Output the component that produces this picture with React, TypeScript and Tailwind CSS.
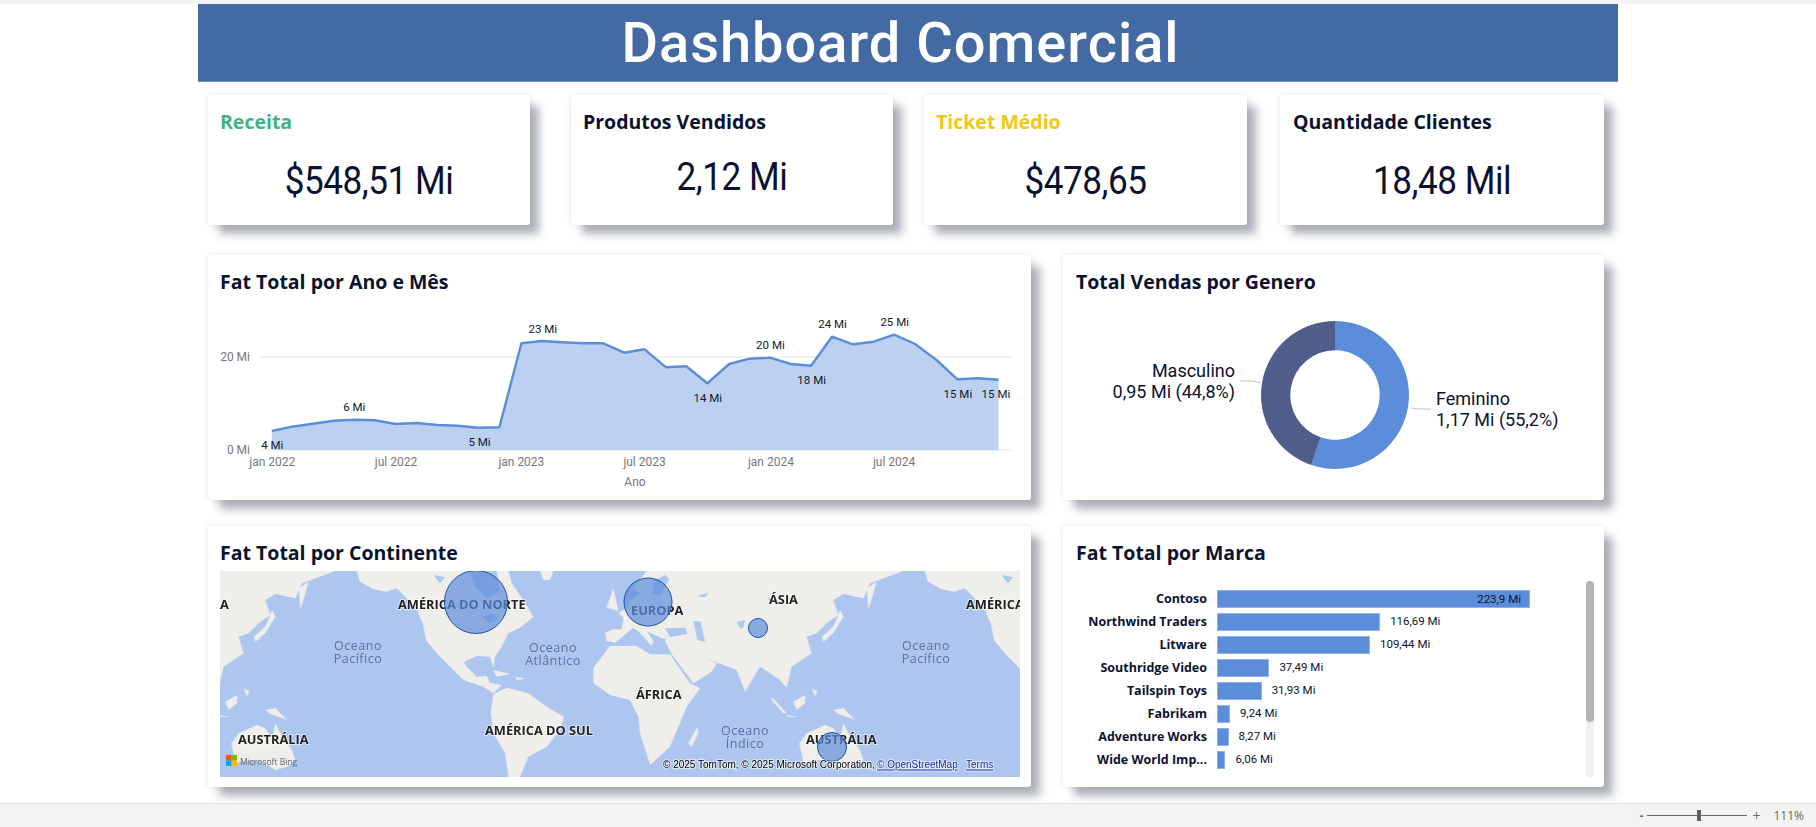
const titleFont = "font-['Open_Sans'] font-bold text-[#0b1230]";

function Card({ title, pad, className, children }: { title?: string; pad?: string; className?: string; children?: React.ReactNode }) {
  return (
    <div className={"relative bg-white rounded-[3px] shadow-[10px_10px_8px_-1px_rgba(110,114,130,0.55),0_0_6px_rgba(0,0,0,0.1)] " + (className ?? "")}>
      {title && (
        <div className={"pt-3 leading-[30px] text-[19.5px] " + (pad ?? "pl-3") + " " + titleFont}>{title}</div>
      )}
      {children}
    </div>
  );
}

function Kpi({ title, value, color, valueMt, className, pad }: { title: string; value: string; color: string; valueMt: string; className: string; pad: string }) {
  return (
    <Card className={"h-[130px] " + className}>
      <div className={"pt-3 leading-[30px] text-[19.5px] font-['Open_Sans'] font-bold " + pad + " " + color}>{title}</div>
      <div className={"text-center leading-[46px] text-[39px] scale-x-[0.9] font-[Roboto] tracking-[-0.5px] text-[#0b1230] " + valueMt}>{value}</div>
    </Card>
  );
}

const pts: [number, number][] = [[134,543],[172,530],[211,521],[249,512],[288,509],[327,511],[365,522],[404,519],[443,525],[481,527],[520,533],[559,532],[600,280],[638,273],[676,277],[715,280],[753,280],[792,308],[830,298],[870,352],[908,349],[947,400],[988,342],[1026,326],[1064,323],[1103,342],[1141,347],[1180,260],[1219,283],[1258,275],[1296,254],[1335,282],[1375,330],[1414,388],[1453,385],[1491,389]];
const fx = (p: number) => p / 1.867 - 8;
const fy = (p: number) => p / 3 - 50;

const dataLabels: [string, number, number][] = [["23 Mi",640,238],["6 Mi",288,472],["4 Mi",135,586],["5 Mi",522,576],["14 Mi",948,445],["20 Mi",1065,285],["18 Mi",1142,390],["24 Mi",1181,222],["25 Mi",1297,216],["15 Mi",1415,432],["15 Mi",1486,432]];
const axisLabels: [string, number][] = [["jan 2022",135],["jul 2022",366],["jan 2023",600],["jul 2023",830],["jan 2024",1066],["jul 2024",1296]];

function LineChart() {
  const line = pts.map(([x, y]) => `${fx(x).toFixed(1)},${fy(y).toFixed(1)}`).join(" ");
  const area = `${fx(134).toFixed(1)},150 ${line} ${fx(1491).toFixed(1)},150`;
  return (
    <svg width="823" height="200" viewBox="0 0 823 200" className="block mt-[3px]">
      <line x1="53" x2="803" y1="57" y2="57" className="stroke-[#e4e4e4]" strokeWidth="1" />
      <line x1="53" x2="803" y1="150" y2="150" className="stroke-[#e4e4e4]" strokeWidth="1" />
      <polygon points={area} className="fill-[#bcd1f1]" />
      <polyline points={line} fill="none" className="stroke-[#5b8ddb]" strokeWidth="2.4" strokeLinejoin="round" />
      <g className="font-[Roboto] text-[11.5px] fill-[#111827]" textAnchor="middle">
        {dataLabels.map(([t, x, y], i) => (
          <text key={i} x={fx(x)} y={fy(y)} dominantBaseline="central">{t}</text>
        ))}
      </g>
      <g className="font-[Roboto] text-[12px] fill-[#777777]">
        <text x="42" y="57" textAnchor="end" dominantBaseline="central">20 Mi</text>
        <text x="42" y="150" textAnchor="end" dominantBaseline="central">0 Mi</text>
        {axisLabels.map(([t, x]) => (
          <text key={t} x={fx(x)} y="162" textAnchor="middle" dominantBaseline="central">{t}</text>
        ))}
        <text x="427" y="182" textAnchor="middle" dominantBaseline="central">Ano</text>
      </g>
    </svg>
  );
}

function arc(r0: number, r1: number, a0: number, a1: number, cx: number, cy: number) {
  const p = (r: number, a: number) => {
    const t = (a * Math.PI) / 180;
    return `${(cx + r * Math.sin(t)).toFixed(2)} ${(cy - r * Math.cos(t)).toFixed(2)}`;
  };
  const large = a1 - a0 > 180 ? 1 : 0;
  return `M${p(r1, a0)} A${r1} ${r1} 0 ${large} 1 ${p(r1, a1)} L${p(r0, a1)} A${r0} ${r0} 0 ${large} 0 ${p(r0, a0)} Z`;
}

function Donut() {
  return (
    <svg width="541" height="200" viewBox="0 0 541 200" className="block mt-[3px]">
      <path d={arc(44.7, 74, 0, 198.7, 272, 95)} className="fill-[#5b8ddb]" />
      <path d={arc(44.7, 74, 198.7, 360, 272, 95)} className="fill-[#505d8a]" />
      <path d="M177 81 L190 81 L198 83" fill="none" className="stroke-[#c4c4c4]" />
      <path d="M348 108 L356 109 L368 109" fill="none" className="stroke-[#c4c4c4]" />
      <g className="font-[Roboto] text-[18px] fill-[#0b1230]">
        <text x="172" y="70" textAnchor="end" dominantBaseline="central">Masculino</text>
        <text x="172" y="91" textAnchor="end" dominantBaseline="central">0,95 Mi (44,8%)</text>
        <text x="373" y="98" dominantBaseline="central">Feminino</text>
        <text x="373" y="119" dominantBaseline="central">1,17 Mi (55,2%)</text>
      </g>
    </svg>
  );
}

const labelCls = "font-['Open_Sans'] font-bold text-[12.8px] fill-[#222] stroke-white stroke-[2px] [stroke-opacity:0.55] [paint-order:stroke]";
const oceanCls = "font-['Open_Sans'] text-[12.5px] tracking-[0.5px] fill-[#5b70a8]";
const land = "fill-[#f0eeea]";
const sea = "fill-[#adc6ef]";

function Ocean({ x, y, a, b }: { x: number; y: number; a: string; b: string }) {
  return (
    <g className={oceanCls} textAnchor="middle">
      <text x={x} y={y} dominantBaseline="central">{a}</text>
      <text x={x} y={y + 13} dominantBaseline="central">{b}</text>
    </g>
  );
}

function Americas() {
  return (
    <g>
      <polygon className={land} points="470,153 480,185 520,208 560,215 590,205 620,235 650,270 668,310 678,360 710,400 750,440 790,480 850,500 880,520 905,495 870,488 860,468 830,470 800,440 792,425 830,408 870,410 880,445 885,410 905,380 925,340 965,320 1000,290 985,265 960,225 935,190 925,153" />
      <polygon className={sea} points="810,153 890,153 900,215 860,235 825,200" />
      <polygon className={sea} points="845,290 880,280 895,300 870,310" />
      <polygon className={sea} points="700,165 735,172 720,190" />
      <polygon className={land} points="1020,153 1060,153 1050,180 1030,180" />
      <polygon className={land} points="880,522 920,503 985,520 1040,560 1092,590 1080,630 1040,680 985,710 960,771 925,771 915,700 880,640 872,580" />
      <polygon className={land} points="880,450 930,462 890,470" />
      <polygon className={land} points="945,470 975,476 950,480" />
    </g>
  );
}

function OldWorld() {
  return (
    <g>
      <polygon className={land} points="110,153 880,153 780,190 760,235 700,222 670,240 685,285 650,310 620,340 590,350 605,400 545,440 530,505 510,480 480,460 450,440 405,515 380,450 300,420 275,410 320,430 305,455 250,490 185,403 165,363 175,338 165,358 140,348 110,333 130,363 125,378 90,338 70,323 40,348 15,368 -10,363 -15,338 10,328 35,328 40,293 25,278 50,263 60,238 90,223 70,203" />
      <polygon className={sea} points="165,325 225,323 232,342 180,352" />
      <polygon className={sea} points="250,303 272,305 285,365 262,360" />
      <polygon className={sea} points="130,183 165,165 178,178 150,225 128,222" />
      <polygon className={sea} points="260,228 295,218 285,232" />
      <polygon className={sea} points="380,305 405,300 398,326 388,322" />
      <polygon className={sea} points="470,236 498,232 484,244" />
      <polygon className={land} points="10,203 25,273 -10,263 0,233" />
      <polygon className={land} points="-50,443 0,378 80,378 120,403 180,403 240,490 270,505 230,560 210,610 180,680 120,735 90,640 85,590 60,540 0,525 -50,490" />
      <polygon className={land} points="262,620 265,640 245,680 235,670" />
      <polygon className={land} points="690,270 700,290 670,340 640,365 635,350 670,320" />
      <polygon className={land} points="485,530 530,580 520,580 485,540" />
      <polygon className={land} points="530,585 560,590 555,592 530,590" />
      <polygon className={land} points="550,545 585,525 585,550 560,570" />
      <polygon className={land} points="605,505 622,515 615,530" />
      <polygon className={land} points="670,570 700,565 735,600 710,590 690,585" />
      <polygon className={land} points="568,670 590,640 645,615 670,625 690,655 700,610 720,650 750,690 760,720 735,740 700,750 660,725 625,720 580,730" />
      <polygon className={land} points="770,205 800,185 775,270" />
    </g>
  );
}

function WorldMap() {
  return (
    <svg width="800" height="206" viewBox="0 0 800 206" className="block mx-3 mt-[3px] bg-[#adc6ef]">
      <g transform="translate(-20,-51) scale(0.33333)" className="blur-[0.8px]">
        <g transform="translate(-474,0)"><OldWorld /></g>
        <Americas />
        <g transform="translate(1230,0)"><OldWorld /></g>
        <g transform="translate(1704,0)"><Americas /></g>
      </g>
      <Ocean x={138} y={74} a="Oceano" b="Pacífico" />
      <Ocean x={333} y={76} a="Oceano" b="Atlântico" />
      <Ocean x={706} y={74} a="Oceano" b="Pacífico" />
      <Ocean x={525} y={159} a="Oceano" b="Índico" />
      <g className={labelCls}>
        <text x="0" y="33" dominantBaseline="central">A</text>
        <text x="178" y="33" dominantBaseline="central">AMÉRICA DO NORTE</text>
        <text x="411" y="39" dominantBaseline="central">EUROPA</text>
        <text x="549" y="28" dominantBaseline="central">ÁSIA</text>
        <text x="746" y="33" dominantBaseline="central">AMÉRICA</text>
        <text x="416" y="123" dominantBaseline="central">ÁFRICA</text>
        <text x="265" y="159" dominantBaseline="central">AMÉRICA DO SUL</text>
        <text x="18" y="168" dominantBaseline="central">AUSTRÁLIA</text>
        <text x="586" y="168" dominantBaseline="central">AUSTRÁLIA</text>
      </g>
      <g className="fill-[#5b8ddb]/70 stroke-[#1f4fa3]" strokeWidth="1">
        <circle cx="256" cy="31" r="31.5" />
        <circle cx="428" cy="31" r="24" />
        <circle cx="538" cy="57" r="9.5" />
        <circle cx="612" cy="176" r="14.5" />
      </g>
      <rect x="6" y="184" width="5.5" height="5.5" className="fill-[#f25022]" />
      <rect x="11.5" y="184" width="5.5" height="5.5" className="fill-[#7fba00]" />
      <rect x="6" y="189.5" width="5.5" height="5.5" className="fill-[#00a4ef]" />
      <rect x="11.5" y="189.5" width="5.5" height="5.5" className="fill-[#ffb900]" />
      <text x="20" y="190" dominantBaseline="central" className="font-['Open_Sans'] text-[8.5px] fill-[#666]">Microsoft Bing</text>
      <g className="font-['Liberation_Sans'] text-[10px] stroke-white stroke-[2px] [stroke-opacity:0.6] [paint-order:stroke]">
        <text x="443" y="193" dominantBaseline="central" className="fill-black">© 2025 TomTom, © 2025 Microsoft Corporation,</text>
        <text x="657" y="193" dominantBaseline="central" className="fill-[#1a2fa0] underline">© OpenStreetMap</text>
        <text x="746" y="193" dominantBaseline="central" className="fill-[#1a2fa0] underline">Terms</text>
      </g>
    </svg>
  );
}

const brands: [string, number, string][] = [
  ["Contoso", 223.9, "223,9 Mi"],
  ["Northwind Traders", 116.69, "116,69 Mi"],
  ["Litware", 109.44, "109,44 Mi"],
  ["Southridge Video", 37.49, "37,49 Mi"],
  ["Tailspin Toys", 31.93, "31,93 Mi"],
  ["Fabrikam", 9.24, "9,24 Mi"],
  ["Adventure Works", 8.27, "8,27 Mi"],
  ["Wide World Imp...", 6.06, "6,06 Mi"],
];

const valCls = "font-[Roboto] text-[11.5px] text-[#0b1230]";

function Bars() {
  return (
    <div className="mt-[22px] flex flex-col gap-[5px]">
      {brands.map(([name, v, label], i) => (
        <div key={name} className="flex items-center h-[18px]">
          <div className="w-[132px] text-right font-['Open_Sans'] font-bold text-[12.5px] text-[#0b1230] whitespace-nowrap">{name}</div>
          <div className="relative ml-[10px] h-[18px] bg-[#5b8ddb] border border-[#8fb3ea]" style={{ width: `${v * 1.398}px` }}>
            {i === 0 && <span className={"absolute right-[8px] top-0 leading-[16px] " + valCls}>{label}</span>}
          </div>
          {i > 0 && <span className={"ml-[10px] " + valCls}>{label}</span>}
        </div>
      ))}
    </div>
  );
}

export default function App() {
  return (
    <div className="w-[1816px] h-[827px] flex flex-col bg-white overflow-hidden">
      <div className="h-1 bg-[#f3f3f3]" />
      <div className="flex-1 pl-[198px]">
        <div className="w-[1420px] h-[78px] pr-[15px] bg-[#446aa4] border-b border-[#6f8fc0] flex items-center justify-center font-[Roboto] font-medium text-[56px] tracking-[1px] text-white">
          Dashboard Comercial
        </div>
        <div className="pl-[10px] w-[1406px]">
          <div className="flex mt-[13px]">
            <Kpi className="w-[322px]" pad="pl-3" title="Receita" color="text-[#41b380]" value="$548,51 Mi" valueMt="mt-[21px]" />
            <Kpi className="w-[322px] ml-[41px]" pad="pl-3" title="Produtos Vendidos" color="text-[#0b1230]" value="2,12 Mi" valueMt="mt-[17px]" />
            <Kpi className="w-[323px] ml-[31px]" pad="pl-3" title="Ticket Médio" color="text-[#f2c811]" value="$478,65" valueMt="mt-[21px]" />
            <Kpi className="w-[324px] ml-[33px]" pad="pl-[13px]" title="Quantidade Clientes" color="text-[#0b1230]" value="18,48 Mil" valueMt="mt-[21px]" />
          </div>
          <div className="flex mt-[30px]">
            <Card className="w-[823px] h-[245px]" title="Fat Total por Ano e Mês"><LineChart /></Card>
            <Card className="w-[541px] h-[245px] ml-[32px]" pad="pl-[13px]" title="Total Vendas por Genero"><Donut /></Card>
          </div>
          <div className="flex mt-[26px]">
            <Card className="w-[823px] h-[261px]" title="Fat Total por Continente"><WorldMap /></Card>
            <Card className="w-[541px] h-[261px] ml-[32px]" pad="pl-[13px]" title="Fat Total por Marca">
              <div className="px-3"><Bars /></div>
              <div className="absolute right-[10px] top-[55px] bottom-[10px] w-2 rounded bg-[#f0f0f0]">
                <div className="h-[141px] rounded bg-[#b3b3b3]" />
              </div>
            </Card>
          </div>
        </div>
      </div>
      <div className="h-6 bg-[#f3f3f3] border-t border-[#e0e0e0] flex items-center justify-end pr-3 font-['Open_Sans'] text-[12px] text-[#666]">
        <span className="leading-none font-bold">-</span>
        <div className="relative w-[100px] h-px bg-[#666] ml-[4px]">
          <div className="absolute left-[50px] -top-[5px] w-1 h-[11px] bg-[#606060]" />
        </div>
        <span className="ml-[5px] text-[14px] leading-none">+</span>
        <span className="ml-[13px]">111%</span>
      </div>
    </div>
  );
}
